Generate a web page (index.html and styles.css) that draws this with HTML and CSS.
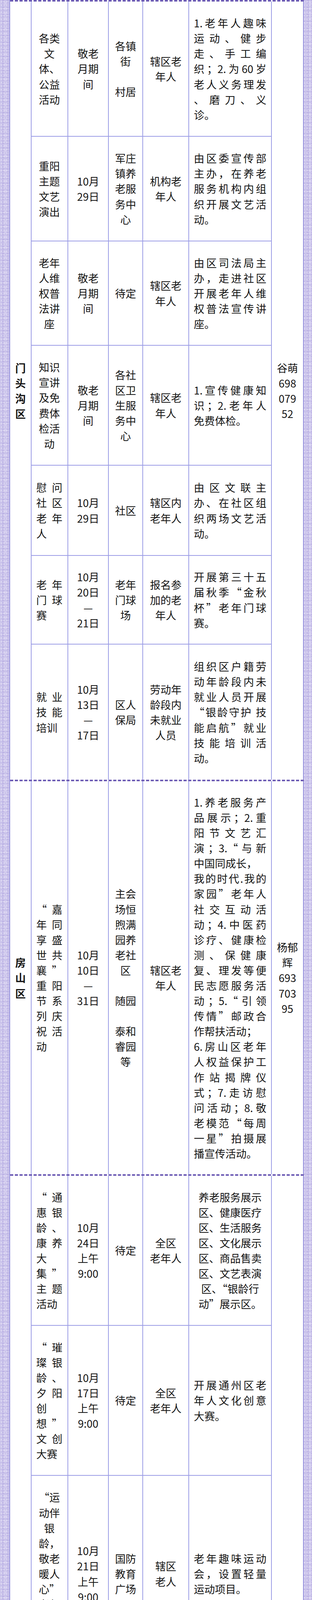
FILE: index.html
```html
<!DOCTYPE html>
<html lang="zh-CN">
<head>
<meta charset="utf-8">
<title>敬老月活动安排</title>
<link rel="stylesheet" href="styles.css">
</head>
<body>
<main class="sheet">

<section class="grp g-mtg">
  <div class="dist"><span class="l">门</span><span class="l">头</span><span class="l">沟</span><span class="l">区</span></div>

  <div class="c nm"><span class="l">各类</span><span class="l">文</span><span class="l">体、</span><span class="l">公益</span><span class="l">活动</span></div>
  <div class="c"><span class="l">敬老</span><span class="l">月期</span><span class="l">间</span></div>
  <div class="c"><span class="l">各镇</span><span class="l">街</span><span class="l">&nbsp;</span><span class="l">村居</span></div>
  <div class="c"><span class="l">辖区老</span><span class="l">年人</span></div>
  <div class="c ct"><span class="l j">1.老年人趣味</span><span class="l j">运动、健步</span><span class="l j">走、手工编</span><span class="l j">织；2.为60岁</span><span class="l j">老人义务理发</span><span class="l j">、磨刀、义</span><span class="l">诊。</span></div>

  <div class="c nm"><span class="l">重阳</span><span class="l">主题</span><span class="l">文艺</span><span class="l">演出</span></div>
  <div class="c"><span class="l">10月</span><span class="l">29日</span></div>
  <div class="c"><span class="l">军庄</span><span class="l">镇养</span><span class="l">老服</span><span class="l">务中</span><span class="l">心</span></div>
  <div class="c"><span class="l">机构老</span><span class="l">年人</span></div>
  <div class="c ct"><span class="l j">由区委宣传部</span><span class="l j">主办，在养老</span><span class="l j">服务机构内组</span><span class="l j">织开展文艺活</span><span class="l">动。</span></div>

  <div class="c nm"><span class="l">老年</span><span class="l">人维</span><span class="l">权普</span><span class="l">法讲</span><span class="l">座</span></div>
  <div class="c"><span class="l">敬老</span><span class="l">月期</span><span class="l">间</span></div>
  <div class="c"><span class="l">待定</span></div>
  <div class="c"><span class="l">辖区老</span><span class="l">年人</span></div>
  <div class="c ct"><span class="l j">由区司法局主</span><span class="l j">办，走进社区</span><span class="l j">开展老年人维</span><span class="l j">权普法宣传讲</span><span class="l">座。</span></div>

  <div class="c nm"><span class="l">知识</span><span class="l">宣讲</span><span class="l">及免</span><span class="l">费体</span><span class="l">检活</span><span class="l">动</span></div>
  <div class="c"><span class="l">敬老</span><span class="l">月期</span><span class="l">间</span></div>
  <div class="c"><span class="l">各社</span><span class="l">区卫</span><span class="l">生服</span><span class="l">务中</span><span class="l">心</span></div>
  <div class="c"><span class="l">辖区老</span><span class="l">年人</span></div>
  <div class="c ct"><span class="l j">1.宣传健康知</span><span class="l j">识；2.老年人</span><span class="l">免费体检。</span></div>

  <div class="c nm jl"><span class="l j">慰问</span><span class="l j">社区</span><span class="l j">老年</span><span class="l">人</span></div>
  <div class="c"><span class="l">10月</span><span class="l">29日</span></div>
  <div class="c"><span class="l">社区</span></div>
  <div class="c"><span class="l">辖区内</span><span class="l">老年人</span></div>
  <div class="c ct"><span class="l j">由区文联主</span><span class="l j">办、在社区组</span><span class="l j">织两场文艺活</span><span class="l">动。</span></div>

  <div class="c nm jl"><span class="l j">老年</span><span class="l j">门球</span><span class="l">赛</span></div>
  <div class="c"><span class="l">10月</span><span class="l">20日</span><span class="l">—</span><span class="l">21日</span></div>
  <div class="c"><span class="l">老年</span><span class="l">门球</span><span class="l">场</span></div>
  <div class="c"><span class="l">报名参</span><span class="l">加的老</span><span class="l">年人</span></div>
  <div class="c ct"><span class="l j">开展第三十五</span><span class="l j">届秋季“金秋</span><span class="l j">杯”老年门球</span><span class="l">赛。</span></div>

  <div class="c nm jl lr"><span class="l j">就业</span><span class="l j">技能</span><span class="l">培训</span></div>
  <div class="c lr"><span class="l">10月</span><span class="l">13日</span><span class="l">—</span><span class="l">17日</span></div>
  <div class="c lr"><span class="l">区人</span><span class="l">保局</span></div>
  <div class="c lr"><span class="l">劳动年</span><span class="l">龄段内</span><span class="l">未就业</span><span class="l">人员</span></div>
  <div class="c ct lr"><span class="l j">组织区户籍劳</span><span class="l j">动年龄段内未</span><span class="l j">就业人员开展</span><span class="l j">“银龄守护 技</span><span class="l j">能启航”就业</span><span class="l j">技能培训活</span><span class="l">动。</span></div>

  <div class="contact"><span class="l">谷萌</span><span class="l">698</span><span class="l">079</span><span class="l">52</span></div>
</section>

<section class="grp g-fs">
  <div class="dist"><span class="l">房</span><span class="l">山</span><span class="l">区</span></div>
  <div class="c nm jl lr"><span class="l j">“嘉</span><span class="l j">年同</span><span class="l j">享盛</span><span class="l j">世共</span><span class="l j">襄”</span><span class="l j">重阳</span><span class="l j">节系</span><span class="l j">列庆</span><span class="l j">祝活</span><span class="l">动</span></div>
  <div class="c lr"><span class="l">10月</span><span class="l">10日</span><span class="l">—</span><span class="l">31日</span></div>
  <div class="c lr"><span class="l">主会</span><span class="l">场恒</span><span class="l">煦满</span><span class="l">园养</span><span class="l">老社</span><span class="l">区</span><span class="l">&nbsp;</span><span class="l">随园</span><span class="l">&nbsp;</span><span class="l">泰和</span><span class="l">睿园</span><span class="l">等</span></div>
  <div class="c lr"><span class="l">辖区老</span><span class="l">年人</span></div>
  <div class="c ct lr"><span class="l j">1.养老服务产</span><span class="l j">品展示；2.重</span><span class="l j">阳节文艺汇</span><span class="l j">演；3.“与新</span><span class="l">中国同成长，</span><span class="l j">我的时代.我的</span><span class="l j">家园”老年人</span><span class="l j">社交互动活</span><span class="l j">动；4.中医药</span><span class="l j">诊疗、健康检</span><span class="l j">测、保健康</span><span class="l j">复、理发等便</span><span class="l j">民志愿服务活</span><span class="l j">动；5.“引领</span><span class="l j">传情”邮政合</span><span class="l">作帮扶活动；</span><span class="l j">6.房山区老年</span><span class="l j">人权益保护工</span><span class="l j">作站揭牌仪</span><span class="l j">式；7.走访慰</span><span class="l j">问活动；8.敬</span><span class="l j">老模范“每周</span><span class="l j">一星”拍摄展</span><span class="l">播宣传活动。</span></div>
  <div class="contact"><span class="l">杨郁</span><span class="l">辉</span><span class="l">693</span><span class="l">703</span><span class="l">95</span></div>
</section>

<section class="grp g-tz">
  <div class="dist"><span class="l">通</span><span class="l">州</span><span class="l">区</span></div>

  <div class="c nm jl"><span class="l j">“通</span><span class="l j">惠银</span><span class="l j">龄、</span><span class="l j">康养</span><span class="l">大</span><span class="l j">集”</span><span class="l j">主题</span><span class="l">活动</span></div>
  <div class="c"><span class="l">10月</span><span class="l">24日</span><span class="l">上午</span><span class="l">9:00</span></div>
  <div class="c"><span class="l">待定</span></div>
  <div class="c"><span class="l">全区</span><span class="l">老年人</span></div>
  <div class="c ct mid"><span class="l">养老服务展示</span><span class="l">区、健康医疗</span><span class="l">区、生活服务</span><span class="l">区、文化展示</span><span class="l">区、商品售卖</span><span class="l">区、文艺表演</span><span class="l">区、“银龄行</span><span class="l">动”展示区。</span></div>

  <div class="c nm jl"><span class="l j">“璀</span><span class="l j">璨银</span><span class="l j">龄、</span><span class="l j">夕阳</span><span class="l">创</span><span class="l j">想”</span><span class="l j">文创</span><span class="l">大赛</span></div>
  <div class="c"><span class="l">10月</span><span class="l">17日</span><span class="l">上午</span><span class="l">9:00</span></div>
  <div class="c"><span class="l">待定</span></div>
  <div class="c"><span class="l">全区</span><span class="l">老年人</span></div>
  <div class="c ct"><span class="l j">开展通州区老</span><span class="l j">年人文化创意</span><span class="l">大赛。</span></div>

  <div class="c nm"><span class="l">“运</span><span class="l">动伴</span><span class="l">银</span><span class="l">龄，</span><span class="l">敬老</span><span class="l">暖人</span><span class="l">心”</span><span class="l">老年</span><span class="l">趣味</span><span class="l">运动</span><span class="l">会</span></div>
  <div class="c"><span class="l">10月</span><span class="l">21日</span><span class="l">上午</span><span class="l">9:00</span></div>
  <div class="c"><span class="l">国防</span><span class="l">教育</span><span class="l">广场</span></div>
  <div class="c"><span class="l">辖区</span><span class="l">老人</span></div>
  <div class="c ct"><span class="l j">老年趣味运动</span><span class="l j">会，设置轻量</span><span class="l">运动项目。</span></div>

  <div class="c nm jl"><span class="l j">交通</span><span class="l j">安全</span><span class="l j">专题</span><span class="l">培训</span></div>
  <div class="c"><span class="l">10月</span></div>
  <div class="c"><span class="l">待定</span></div>
  <div class="c"><span class="l">交通安</span><span class="l">全文明</span><span class="l">引导员</span></div>
  <div class="c ct"><span class="l j">邀请通州交通</span><span class="l j">支队围绕引导</span><span class="l j">员日常工作场</span><span class="l">景进行讲解。</span></div>

  <div class="c nm jl"><span class="l j">银龄</span><span class="l j">反诈</span><span class="l j">知识</span><span class="l j">专题</span><span class="l">培训</span></div>
  <div class="c"><span class="l">10月</span></div>
  <div class="c"><span class="l">待定</span></div>
  <div class="c"><span class="l">交通安</span><span class="l">全文明</span><span class="l">引导员</span></div>
  <div class="c ct"><span class="l j">邀请通州公安</span><span class="l j">分局刑侦支队</span><span class="l j">结合老年人易</span><span class="l j">受骗的常见场</span><span class="l">景进行讲解。</span></div>

  <div class="c nm jl"><span class="l j">养老</span><span class="l j">服务</span><span class="l j">中心</span><span class="l j">学堂</span><span class="l">活动</span></div>
  <div class="c"><span class="l">10月</span><span class="l">15日</span></div>
  <div class="c"><span class="l">临河</span><span class="l">里街</span><span class="l">道养</span><span class="l">老服</span><span class="l">务中</span><span class="l">心</span></div>
  <div class="c"><span class="l">辖区养</span><span class="l">老服务</span><span class="l">中心服</span><span class="l">务对象</span></div>
  <div class="c ct"><span class="l j">结合传统中秋</span><span class="l j">节日与敬老主</span><span class="l j">题，兼顾文化</span><span class="l j">体验（赏月绘</span><span class="l j">画）与健康知</span><span class="l">识普及。</span></div>

  <div class="c nm jl lr"><span class="l j">养老</span><span class="l j">服务</span><span class="l j">中心</span><span class="l j">学堂</span><span class="l">活动</span></div>
  <div class="c lr"><span class="l">10月</span><span class="l">15日</span><span class="l">&nbsp;</span><span class="l">10月</span><span class="l">22日</span><span class="l">—</span><span class="l">24日</span><span class="l">&nbsp;</span><span class="l">10月</span><span class="l">28日</span></div>
  <div class="c lr"><span class="l">台湖</span><span class="l">镇养</span><span class="l">老服</span><span class="l">务中</span><span class="l">心</span></div>
  <div class="c lr"><span class="l">辖区内</span><span class="l">养老服</span><span class="l">务中心</span><span class="l">服务对</span><span class="l">象</span></div>
  <div class="c ct lr"><span class="l j">10月15日上午</span><span class="l">防跌倒讲座；</span><span class="l j">10月22日—24</span><span class="l j">日桥牌技能教</span><span class="l j">学；10月28日</span><span class="l j">下午摄影教学</span><span class="l j">覆盖“安全防</span><span class="l j">护+益智娱乐</span><span class="l j">+兴趣培养”三</span><span class="l j">类需求，课程</span><span class="l j">设计注重实操</span><span class="l j">性（如防跌倒</span><span class="l j">动作演示、桥</span><span class="l">牌实战练习)。</span></div>

  <div class="contact"><span class="l">任爽</span><span class="l">605</span><span class="l">009</span><span class="l">88</span></div>
</section>

</main>
</body>
</html>
```
FILE: styles.css
```css
html, body {
  margin: 0;
  padding: 0;
}

body {
  background-color: #c8c1ea;
  background-image:
    radial-gradient(ellipse at center, rgba(255, 255, 255, 0.5) 0, rgba(255, 255, 255, 0) 60%),
    radial-gradient(ellipse at center, rgba(140, 120, 205, 0.35) 0, rgba(140, 120, 205, 0) 60%),
    radial-gradient(ellipse at center, rgba(235, 230, 250, 0.45) 0, rgba(235, 230, 250, 0) 65%);
  background-size: 7px 9px, 11px 6px, 17px 13px;
  background-position: 0 0, 3px 4px, 5px 2px;
  font-family: "Noto Sans CJK SC", "Noto Sans CJK TC", sans-serif;
  color: #141414;
  font-size: 27px;
  line-height: 39.1px;
}

.sheet {
  width: 753px;
  margin-left: 24px;
  background: #ffffff;
  border-left: 2px solid #938fdc;
  border-bottom: 4px dashed #6c5bb4;
}

.grp {
  display: grid;
  grid-template-columns: 55px 94px 104px 88px 118px 212px 82px;
  border-top: 4px dashed #6c5bb4;
}

.g-mtg {
  grid-template-rows: 346px 268px 267px 307px 231px 227px 346px;
}

.g-fs {
  grid-template-rows: 1006px;
}

.g-tz {
  grid-template-rows: 384px 384px 503px 228px 268px 307px 615px;
}

.dist,
.contact,
.c {
  box-sizing: border-box;
  display: flex;
  flex-direction: column;
  justify-content: center;
  text-align: center;
  min-width: 0;
  min-height: 0;
}

.dist {
  grid-column: 1;
  grid-row: 1 / -1;
  border-right: 2px solid #9d9ee6;
  font-weight: 700;
}

.contact {
  grid-column: 7;
  grid-row: 1 / -1;
  border-right: 2px solid #938fdc;
}

.c {
  border-right: 2px solid #9d9ee6;
  border-bottom: 2px solid #9d9ee6;
  padding: 0 12px;
}

.c.lr {
  border-bottom: 0;
}

.nm {
  padding: 0 13px 0 12px;
}

.jl,
.ct {
  text-align: left;
}

.ct.mid {
  text-align: center;
}

.l {
  display: block;
  height: 39.1px;
  white-space: nowrap;
}

.l.j {
  white-space: normal;
  text-align: justify;
  text-align-last: justify;
}
```
